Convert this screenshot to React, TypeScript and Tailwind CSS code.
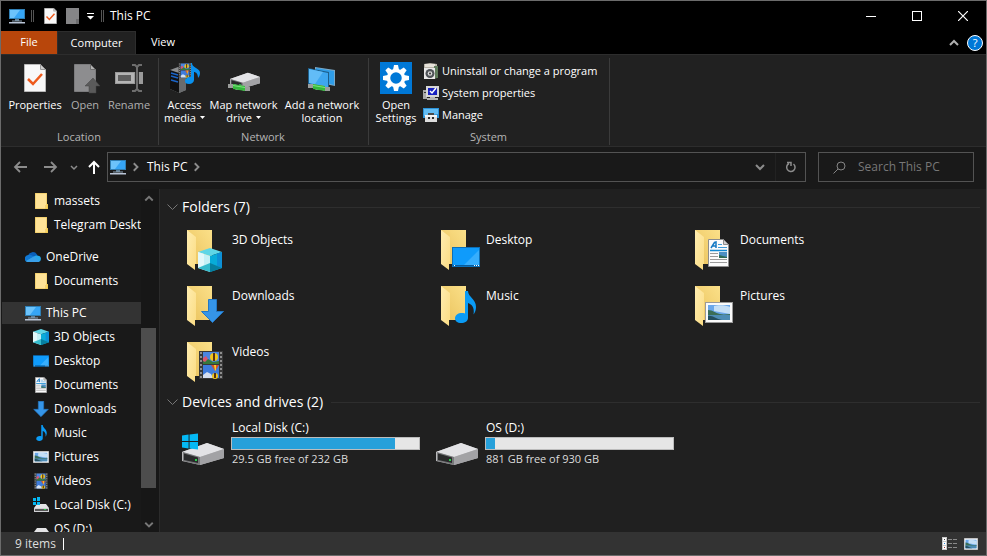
import type { ReactNode, SVGProps } from "react";

type IconProps = SVGProps<SVGSVGElement>;

/* ---------- icons ---------- */

function PcIcon(props: IconProps) {
  return (
    <svg viewBox="0 0 16 16" width={16} height={16} {...props}>
      <rect x="0" y="1" width="16" height="10" fill="#2f7fb5" />
      <path d="M1 2h14v8H1z" fill="#36a5f5" />
      <path d="M1 2h10L5 10H1z" fill="#6cc3fb" />
      <path d="M6 11h4v2H6z" fill="#5f7f96" />
      <path d="M3 12.500h10v1H3z" fill="#8fa3b5" />
      <path d="M0 14h16v1.500H0z" fill="#b9c4d6" />
    </svg>
  );
}

function SmallFolderIcon(props: IconProps) {
  return (
    <svg viewBox="0 0 16 16" width={16} height={16} {...props}>
      <path d="M2 0h12v11h1v5H2z" fill="#e9c04d" />
      <path d="M2.500 .5h11V12h-1v3.500h-10z" fill="#ffe397" />
      <path d="M13 11.500h1.500v4H13z" fill="#fbd45f" />
    </svg>
  );
}

function OneDriveIcon(props: IconProps) {
  return (
    <svg viewBox="0 0 16 16" width={16} height={16} {...props}>
      <path d="M3 6.500A5 5 0 0 1 12 5.500l1 2-5 3-5-1z" fill="#0a5fb9" />
      <path d="M3 6a3.700 3.700 0 0 0-2 6.500L10 8 6 6a5 5 0 0 0-3 0z" fill="#1078d4" />
      <path d="M9 7.500a4 4 0 0 1 4-.8 3.200 3.200 0 0 1 .5 6.300H3a3 3 0 0 1-2-1z" fill="#28a8ea" />
      <path d="M9 7.500l5.500 5A3 3 0 0 1 13.500 13H3a3 3 0 0 1-2-.8z" fill="#3a9fe8" />
    </svg>
  );
}

function CubeIcon(props: IconProps) {
  return (
    <svg viewBox="0 0 24 24" width={16} height={16} {...props}>
      <path d="M0 4l12-4 12 4-12 4z" fill="#5fd6e6" />
      <path d="M0 4l12 4v16L0 20z" fill="#c4f1f6" />
      <path d="M0 4l6 2v11l-6 3z" fill="#e2f8fa" />
      <path d="M12 8l12-4v16l-12 4z" fill="#08acd9" />
      <path d="M19 5.700L24 4v16l-5-2z" fill="#0d90d6" />
      <path d="M0 20l12-5v9z" fill="#35bccd" />
      <path d="M12 15l12 5-12 4z" fill="#077f9f" />
    </svg>
  );
}

function DesktopIcon(props: IconProps) {
  return (
    <svg viewBox="0 0 28 20" width={16} height={12} {...props}>
      <rect width="28" height="20" fill="#0b6fb8" />
      <path d="M1 1h26v17H1z" fill="#0f9bfb" />
      <path d="M27 3L12 18h15z" fill="#37aefd" />
      <path d="M1 18h26v1H1z" fill="#065a9b" />
      <path d="M2 18h1v1H2zM22 18h1v1h-1zM24 18h1v1h-1zM26 18h1v1h-1z" fill="#fff" />
    </svg>
  );
}

function DocumentIcon(props: IconProps) {
  return (
    <svg viewBox="0 0 21 28" width={12} height={16} {...props}>
      <path d="M.5 .5h15l5 5v22H.5z" fill="#fbfbfb" stroke="#8d8d8d" />
      <path d="M15.500 .5v5h5z" fill="#d0d0d0" stroke="#8d8d8d" />
      <path d="M3 9L6.500 3.500 8 3v6M4.500 7H8" fill="none" stroke="#1479c4" strokeWidth="1.500" />
      <path d="M10 5.500h4M10 8.500h9" stroke="#3f9bd8" />
      <path d="M2 11.500h17" stroke="#1289d3" strokeWidth="1.500" />
      <path d="M2 14.500h8M2 17.500h8M2 20.500h17M2 23.500h17" stroke="#9b9b9b" />
      <path d="M11 13h8v6h-8z" fill="#4e90c4" />
      <path d="M11 16l4 1 4 1v1h-8z" fill="#2e6b55" />
    </svg>
  );
}

function DownloadIcon(props: IconProps) {
  return (
    <svg viewBox="0 0 23 24" width={16} height={16} {...props}>
      <path d="M7.500 .5h8v12h7l-11 11-11-11h7z" fill="#3595e8" stroke="#2377c4" />
    </svg>
  );
}

function MusicIcon(props: IconProps) {
  return (
    <svg viewBox="0 0 21 32" width={11} height={16} {...props}>
      <path
        d="M10 0h3c0 6 8 8 8 16 0 3-1 6-2.500 7.500C20 16 16 13 13 12v15c0 3-3 5-7 5-3.500 0-6-2-6-4.500C0 24 3 22 7 22c1 0 2 0 3 .5z"
        fill="#0a9bf5"
      />
    </svg>
  );
}

function PictureIcon(props: IconProps) {
  return (
    <svg viewBox="0 0 28 21" width={16} height={12} {...props}>
      <rect width="28" height="21" fill="#9a9a9a" />
      <path d="M1 1h26v19H1z" fill="#fafafa" />
      <path d="M3 3h22v15H3z" fill="#6aa7ea" />
      <path d="M9 4c4-1 12-1 16 1v7L9 9z" fill="#c5dff6" />
      <path d="M3 8c5 0 7 3 12 4 4 1 7 0 10 0v2H3z" fill="#3b6e57" />
      <path d="M3 13h22v5H3z" fill="#4d8cb4" />
      <path d="M3 14c4-1 8 3 14 4H3z" fill="#244f60" />
    </svg>
  );
}

function VideoIcon(props: IconProps) {
  return (
    <svg viewBox="0 0 24 28" width={14} height={16} {...props}>
      <path d="M0 0h24v28H0z" fill="#383838" />
      <path d="M4 1h16v12H4z" fill="#4a86e0" />
      <path d="M4 14h16v13H4z" fill="#3f7cdc" />
      <path d="M4 10l5-2 5 3 6-1v3H4z" fill="#37783c" />
      <path d="M4 7l3-2 2 3-3 3-2-1z" fill="#d85670" />
      <circle cx="15" cy="6" r="4" fill="#f1c51b" />
      <path d="M14 2h2v8h-2z" fill="#553315" />
      <path d="M4 24l4-3 4 2 2 4H4z" fill="#d5dff0" />
      <path d="M12 14h8l-4 6z" fill="#d4512a" />
      <path d="M15 14h2v5l-1 1z" fill="#f5cf2d" />
      <circle cx="16" cy="25" r="3" fill="#f1c51b" />
      <path d="M15 22h2v5h-2z" fill="#553315" />
      <path d="M2 1v27M22 1v27" stroke="#8f8f8f" strokeWidth="2" strokeDasharray="2 2" />
    </svg>
  );
}

function WindowsLogo(props: IconProps) {
  return (
    <svg viewBox="0 0 17 17" {...props}>
      <path d="M0 2l7-1v7H0zM8 1l9-1v8H8zM0 9h7v7l-7-1zM8 9h9v8l-9-1z" fill="#04b8f4" />
    </svg>
  );
}

function DriveShape(props: IconProps) {
  return (
    <svg viewBox="0 0 42 22" {...props}>
      <path d="M0 9L25 0l17 6v9L18 22 0 18z" fill="#b9b9bb" />
      <path d="M0 9L25 0l17 6-24 8z" fill="#e3e3e6" />
      <path d="M18 14l24-8v9l-24 7z" fill="#a2a2a5" />
      <path d="M1 9l17 5v8L1 18z" fill="#77787a" />
      <path d="M2 10.500l14 4v5.500L2 17z" fill="#292a2b" />
      <path d="M13 16h2v2h-2z" fill="#28d04a" />
    </svg>
  );
}

function SmallDriveIcon({ windows = false }: { windows?: boolean }) {
  return (
    <svg viewBox="0 0 16 16" width={16} height={16}>
      <path d="M4 7h9l3 4H1z" fill="#e4e4e6" />
      <path d="M1 11h15v4H1z" fill="#cfcfd2" />
      <path d="M2 12h13v2H2z" fill="#555" />
      <path d="M11 12h2v1h-2z" fill="#28d04a" />
      {windows && <path d="M0 1h3v3H0zM4 0h3v4H4zM0 5h3v3H0zM4 5h3v3H4z" fill="#04b8f4" />}
    </svg>
  );
}

function LargeFolder({ children }: { children: ReactNode }) {
  return (
    <svg viewBox="0 0 48 48" className="size-12 shrink-0" aria-hidden="true">
      <defs>
        <linearGradient id="folder-back" x1="0" y1="1" x2="1" y2="0">
          <stop offset="0" stopColor="#eac25c" />
          <stop offset="1" stopColor="#fbe089" />
        </linearGradient>
        <linearGradient id="folder-front" x1="0" y1="0" x2="1" y2="1">
          <stop offset="0" stopColor="#ffedb0" />
          <stop offset="1" stopColor="#fbdc83" />
        </linearGradient>
      </defs>
      <path d="M5 4h25v34H5z" fill="url(#folder-back)" />
      <path d="M5 4l9 7v27h-1v6l-8-6z" fill="url(#folder-front)" />
      {children}
    </svg>
  );
}

function CheckedPage(props: IconProps) {
  return (
    <svg viewBox="0 0 22 28" {...props}>
      <path d="M.5 .5h16l5 5v22H.5z" fill="#f8f8f8" stroke="#b9b9b9" />
      <path d="M16.500 .5v5h5z" fill="#cfcfcf" stroke="#999" />
      <path d="M4 15l5 5 9-10" fill="none" stroke="#ee5a1c" strokeWidth="2.500" />
    </svg>
  );
}

function OpenIcon() {
  return (
    <svg viewBox="0 0 32 32" width={32} height={32}>
      <path d="M5.500 2.500h16l5 5v22h-21z" fill="#8d8d8f" stroke="#7c7c7e" />
      <path d="M21.500 2.500v5h5z" fill="#b5b5b5" stroke="#6f6f6f" />
      <path d="M24 16l7 8h-4v7h-7v-7h-4z" fill="#5a5a5a" stroke="#444" strokeWidth=".5" />
    </svg>
  );
}

function RenameIcon() {
  return (
    <svg viewBox="0 0 32 32" width={32} height={32}>
      <path d="M2 10h28v12H2z" fill="#9a9a9a" />
      <path d="M3 11h18v10H3z" fill="#b4b4b4" />
      <path d="M5 13h13v6H5z" fill="#5f5f5f" />
      <path d="M22 10h4v12h-4z" fill="#333" />
      <path d="M19 3h3l2 2 2-2h3M24 5v22M19 29h3l2-2 2 2h3" fill="none" stroke="#6e6e6e" strokeWidth="2" />
    </svg>
  );
}

function AccessMediaIcon() {
  return (
    <svg viewBox="0 0 32 32" width={32} height={32}>
      <path d="M1 8l8-3 8 2v21l-7 3-9-4z" fill="#8c8e90" />
      <path d="M1 8l9 3v20l-9-4z" fill="#111" />
      <path d="M2 11l7 2M2 14l7 2M2 18l7 2" stroke="#1a64c8" strokeWidth="1.500" />
      <path d="M10 11l7-3v20l-7 3z" fill="#696b6d" />
      <VideoIcon x={8} y={1} width={16} height={15} />
      <path d="M23 1c0 5 8 5 8 10 0 2-1 4-2 5 0-4-2-6-4-6v8c0 2-2 4-5 4s-4-1-4-3 2-4 5-4h1V1z" fill="#0a91ee" />
    </svg>
  );
}

function NetworkCable() {
  return (
    <>
      <path d="M0 0h7l2 1h5l3 2h5v4h-6l-2-1H8L6 4H0z" fill="#9b9d9b" />
      <path d="M5 0l12 2v5L5 5z" fill="#35b83c" />
      <path d="M5 1l12 2v1L5 2z" fill="#7ce57e" />
    </>
  );
}

function MapDriveIcon() {
  return (
    <svg viewBox="0 0 32 32" width={32} height={32}>
      <DriveShape x={2} y={10} width={30} height={17} />
      <g transform="translate(0 22)">
        <NetworkCable />
      </g>
    </svg>
  );
}

function AddLocationIcon() {
  return (
    <svg viewBox="0 0 32 32" width={32} height={32}>
      <path d="M9 5l20 3v16L9 20z" fill="#7aa9c8" />
      <path d="M10 6l18 3v14l-18-5z" fill="#2f9de8" />
      <path d="M2 6l21 4v17L2 22z" fill="#1d5f8c" />
      <path d="M3 7l19 4v15L3 21z" fill="#3ea7f0" />
      <path d="M3 7l14 3-8 12-6-1z" fill="#62bcf7" />
      <g transform="translate(2 22)">
        <NetworkCable />
      </g>
    </svg>
  );
}

function SettingsIcon() {
  return (
    <svg viewBox="0 0 32 32" width={32} height={32}>
      <path d="M0 0h32v32H0z" fill="#0078d7" />
      <g fill="#fff">
        {[0, 45, 90, 135, 180, 225, 270, 315].map((angle) => (
          <path key={angle} d="M14 3h4l1 5h-6z" transform={`rotate(${angle} 16 16)`} />
        ))}
      </g>
      <circle cx="16" cy="16" r="7.500" fill="none" stroke="#fff" strokeWidth="3.500" />
    </svg>
  );
}

function UninstallIcon() {
  return (
    <svg viewBox="0 0 16 16" width={16} height={16} className="shrink-0">
      <path d="M1 1l6-1 7 1v14l-5 1-8-1z" fill="#b8b3a8" />
      <path d="M2 1h10v3H2z" fill="#e6e2da" />
      <path d="M11 3h4v12h-4z" fill="#5f7b5c" />
      <path d="M1 5h11v11H1z" fill="#e9e9e9" />
      <circle cx="7" cy="10.500" r="4.500" fill="#4f5358" />
      <circle cx="7" cy="10.500" r="2.300" fill="#dadada" />
      <circle cx="7" cy="10.500" r="1" fill="#333" />
    </svg>
  );
}

function SystemIcon() {
  return (
    <svg viewBox="0 0 16 16" width={16} height={16} className="shrink-0">
      <path d="M0 5h4v9H0z" fill="#a9a9a9" />
      <path d="M1 7h2v1H1z" fill="#333" />
      <path d="M3 1h13v11H3z" fill="#d6d6d6" />
      <path d="M5 3h9v7H5z" fill="#1720c0" />
      <path d="M7 6l2 2 4-5" fill="none" stroke="#fff" strokeWidth="1.500" />
      <path d="M7 12h5v1h3v2H4v-2h3z" fill="#b5b5b5" />
    </svg>
  );
}

function ManageIcon() {
  return (
    <svg viewBox="0 0 16 16" width={16} height={16} className="shrink-0">
      <path d="M0 1h16v10H0z" fill="#2c93d9" />
      <path d="M1 2h14v5L1 9z" fill="#64bdf3" />
      <path d="M5 6h6v2H5z" fill="#4a4a4a" />
      <path d="M2 8h12v7H2z" fill="#dedede" />
      <path d="M2 8h12v2H2z" fill="#f5f5f5" />
      <path d="M5 10h2v2H5zM9 10h2v2H9z" fill="#303030" />
    </svg>
  );
}

function Chevron({ direction, className }: { direction: "up" | "down" | "right"; className: string }) {
  const paths = {
    up: "M1 6l3-3 3 3",
    down: "M1 3l3 3 3-3",
    right: "M3 1l3 3-3 3",
  };
  return (
    <svg viewBox="0 0 8 8" className={className} aria-hidden="true">
      <path d={paths[direction]} fill="none" stroke="currentColor" strokeWidth="1.500" />
    </svg>
  );
}

/* ---------- data ---------- */

const sidebarGroups = [
  [
    { name: "massets", level: 2, icon: <SmallFolderIcon /> },
    { name: "Telegram Desktop", level: 2, icon: <SmallFolderIcon /> },
  ],
  [
    { name: "OneDrive", level: 1, icon: <OneDriveIcon /> },
    { name: "Documents", level: 2, icon: <SmallFolderIcon /> },
  ],
  [
    { name: "This PC", level: 1, icon: <PcIcon />, selected: true },
    { name: "3D Objects", level: 2, icon: <CubeIcon /> },
    { name: "Desktop", level: 2, icon: <DesktopIcon /> },
    { name: "Documents", level: 2, icon: <DocumentIcon /> },
    { name: "Downloads", level: 2, icon: <DownloadIcon /> },
    { name: "Music", level: 2, icon: <MusicIcon /> },
    { name: "Pictures", level: 2, icon: <PictureIcon /> },
    { name: "Videos", level: 2, icon: <VideoIcon /> },
    { name: "Local Disk (C:)", level: 2, icon: <SmallDriveIcon windows /> },
    { name: "OS (D:)", level: 2, icon: <SmallDriveIcon /> },
  ],
];

const folders = [
  { name: "3D Objects", icon: <CubeIcon x={16} y={22} width={24} height={24} /> },
  { name: "Desktop", icon: <DesktopIcon x={16} y={21} width={28} height={20} /> },
  { name: "Documents", icon: <DocumentIcon x={18} y={13} width={21} height={28} /> },
  { name: "Downloads", icon: <DownloadIcon x={19} y={17} width={23} height={24} /> },
  { name: "Music", icon: <MusicIcon x={19} y={9} width={21} height={32} /> },
  { name: "Pictures", icon: <PictureIcon x={15} y={20} width={28} height={21} /> },
  { name: "Videos", icon: <VideoIcon x={17} y={13} width={24} height={28} /> },
];

const drives = [
  { name: "Local Disk (C:)", free: "29.5 GB free of 232 GB", used: 87, windows: true },
  { name: "OS (D:)", free: "881 GB free of 930 GB", used: 5, windows: false },
];

const systemTools = [
  { name: "Uninstall or change a program", icon: <UninstallIcon /> },
  { name: "System properties", icon: <SystemIcon /> },
  { name: "Manage", icon: <ManageIcon /> },
];

/* ---------- parts ---------- */

function TitleBar() {
  return (
    <header className="flex h-[30px] shrink-0 items-center bg-black pl-2">
      <PcIcon />
      <span className="ml-1.5 h-3 w-[3px] border-x border-[#555]" />
      <button aria-label="Properties" className="ml-2.5">
        <CheckedPage className="h-4 w-[13px]" />
      </button>
      <button aria-label="New folder" className="ml-[9px]">
        <svg viewBox="0 0 13 16" className="h-4 w-[13px]">
          <path d="M0 0h13v11h-1v5H0z" fill="#858587" />
          <path d="M10 11h3v5h-3z" fill="#6c6c6e" />
        </svg>
      </button>
      <button aria-label="Customize Quick Access Toolbar" className="ml-2">
        <svg viewBox="0 0 7 7" className="size-[7px]">
          <path d="M0 0h7v1H0zM0 3h7L3.500 6.500z" fill="#fff" />
        </svg>
      </button>
      <span className="ml-[7px] h-3 w-[3px] border-x border-[#555]" />
      <h1 className="ml-1.5 flex-1 text-xs text-white">This PC</h1>
      <button aria-label="Minimize" className="flex h-full w-[46px] items-center justify-center">
        <span className="h-px w-2.5 bg-white" />
      </button>
      <button aria-label="Maximize" className="flex h-full w-[46px] items-center justify-center">
        <span className="size-2.5 border border-white" />
      </button>
      <button aria-label="Close" className="flex h-full w-[46px] items-center justify-center">
        <svg viewBox="0 0 10 10" className="size-2.5">
          <path d="M0 0l10 10M10 0L0 10" stroke="#fff" strokeWidth="1.200" />
        </svg>
      </button>
    </header>
  );
}

function Tabs() {
  return (
    <nav className="flex h-[23px] shrink-0 items-stretch bg-black text-[11px] text-white">
      <button className="w-14 bg-[#b8460b]">File</button>
      <button className="w-[79px] border-x border-t border-[#2d2d2d] bg-[#212121]">Computer</button>
      <button className="w-[54px]">View</button>
      <div className="ml-auto flex items-center gap-2 pr-[3px]">
        <button aria-label="Minimize the Ribbon" className="text-[#b0b0b0]">
          <svg viewBox="0 0 10 7" className="h-[7px] w-2.5">
            <path d="M1 6l4-4 4 4" fill="none" stroke="currentColor" strokeWidth="2" />
          </svg>
        </button>
        <button
          aria-label="Help"
          className="flex size-4 items-center justify-center rounded-full border border-white bg-[#0078d7] leading-none"
        >
          ?
        </button>
      </div>
    </nav>
  );
}

function RibbonButton({
  icon,
  lines,
  width,
  menu = false,
  disabled = false,
}: {
  icon: ReactNode;
  lines: string[];
  width: string;
  menu?: boolean;
  disabled?: boolean;
}) {
  return (
    <button
      disabled={disabled}
      className={`flex flex-col items-center whitespace-nowrap text-[11px] leading-[13px] ${width} ${
        disabled ? "text-[#b0b0b0]" : "text-white"
      }`}
    >
      <span className="mb-1 flex size-8 items-center justify-center">{icon}</span>
      {lines.map((line, i) => (
        <span key={line} className="flex items-center gap-1">
          {line}
          {menu && i === lines.length - 1 && (
            <svg viewBox="0 0 5 3" className="h-[3px] w-[5px]">
              <path d="M0 0h5L2.500 3z" fill="currentColor" />
            </svg>
          )}
        </span>
      ))}
    </button>
  );
}

function RibbonGroup({ label, children }: { label: string; children: ReactNode }) {
  return (
    <section className="mt-[3px] mb-px flex flex-col border-r border-[#3b3b3b] pr-[5px] pl-1">
      <div className="flex flex-1 items-start pt-1">{children}</div>
      <h2 className="pb-px text-center text-[11px] leading-[14px] text-[#b5b5b5]">{label}</h2>
    </section>
  );
}

function Ribbon() {
  return (
    <div className="flex h-[93px] shrink-0 border-y border-[#2d2d2d] bg-[#212121]">
      <RibbonGroup label="Location">
        <RibbonButton icon={<CheckedPage className="h-7 w-[22px]" />} lines={["Properties"]} width="w-[60px]" />
        <RibbonButton icon={<OpenIcon />} lines={["Open"]} width="w-10" disabled />
        <RibbonButton icon={<RenameIcon />} lines={["Rename"]} width="w-12" disabled />
      </RibbonGroup>
      <RibbonGroup label="Network">
        <RibbonButton icon={<AccessMediaIcon />} lines={["Access", "media"]} width="w-[43px]" menu />
        <RibbonButton icon={<MapDriveIcon />} lines={["Map network", "drive"]} width="w-[75px]" menu />
        <RibbonButton icon={<AddLocationIcon />} lines={["Add a network", "location"]} width="w-[82px]" />
      </RibbonGroup>
      <RibbonGroup label="System">
        <RibbonButton icon={<SettingsIcon />} lines={["Open", "Settings"]} width="w-[46px]" />
        <div className="-mt-0.5 ml-1 flex w-[181px] flex-col">
          {systemTools.map((tool) => (
            <button
              key={tool.name}
              className="flex h-[22px] items-center gap-[3px] whitespace-nowrap text-[11px] text-white"
            >
              {tool.icon}
              {tool.name}
            </button>
          ))}
        </div>
      </RibbonGroup>
    </div>
  );
}

function NavigationBar() {
  return (
    <div className="flex shrink-0 items-center bg-[#191919] px-3 pt-[5px] pb-[7px] text-xs text-white">
      <button aria-label="Back" className="text-[#8c8c8c]">
        <svg viewBox="0 0 14 12" className="h-3 w-3.5">
          <path d="M7 1L2 6l5 5M2 6h12" fill="none" stroke="currentColor" strokeWidth="1.800" />
        </svg>
      </button>
      <button aria-label="Forward" className="ml-[17px] text-[#8c8c8c]">
        <svg viewBox="0 0 14 12" className="h-3 w-3.5">
          <path d="M7 1l5 5-5 5M12 6H0" fill="none" stroke="currentColor" strokeWidth="1.800" />
        </svg>
      </button>
      <button aria-label="Recent locations" className="ml-3 text-[#8c8c8c]">
        <Chevron direction="down" className="size-2" />
      </button>
      <button aria-label="Up" className="ml-2.5">
        <svg viewBox="0 0 12 14" className="h-3.5 w-3">
          <path d="M1 7l5-5 5 5M6 2v12" fill="none" stroke="#fff" strokeWidth="2" />
        </svg>
      </button>
      <div className="ml-[7px] flex h-[30px] flex-1 items-center border border-[#535353] pl-0.5">
        <PcIcon />
        <Chevron direction="right" className="ml-1 size-2.5 text-[#8c8c8c]" />
        <button className="mx-[7px]">This PC</button>
        <Chevron direction="right" className="-ml-1 size-2.5 text-[#8c8c8c]" />
        <button
          aria-label="Previous locations"
          className="ml-auto flex h-full w-[30px] items-center justify-center text-[#8c8c8c]"
        >
          <svg viewBox="0 0 10 7" className="h-[7px] w-2.5">
            <path d="M1 1l4 4 4-4" fill="none" stroke="currentColor" strokeWidth="2" />
          </svg>
        </button>
        <button
          aria-label="Refresh"
          className="flex h-full w-[30px] items-center justify-center border-l border-[#222] text-[#8c8c8c]"
        >
          <svg viewBox="0 0 12 12" className="size-3">
            <path d="M4 2.500A4.200 4.200 0 1 0 8.500 3M2 1.500h4V5" fill="none" stroke="currentColor" strokeWidth="1.500" />
          </svg>
        </button>
      </div>
      <label className="ml-3 flex h-[30px] w-[156px] items-center border border-[#535353] pl-3.5">
        <svg viewBox="0 0 13 13" className="size-[13px] shrink-0" aria-hidden="true">
          <circle cx="8" cy="5" r="4" fill="none" stroke="#858585" />
          <path d="M5 8L.5 12.500" stroke="#858585" />
        </svg>
        <input
          type="search"
          aria-label="Search This PC"
          placeholder="Search This PC"
          className="ml-3 w-full min-w-0 bg-transparent outline-none placeholder:text-[#777]"
        />
      </label>
    </div>
  );
}

function Sidebar() {
  return (
    <aside className="flex w-[159px] shrink-0 border-r border-[#2b2b2b] bg-[#191919]">
      <div className="flex flex-1 flex-col gap-2 overflow-hidden pl-px">
        {sidebarGroups.map((group, i) => (
          <ul key={i}>
            {group.map((item) => (
              <li key={item.name} className="py-px">
                <button
                  className={`flex h-[22px] w-full items-center gap-[5px] overflow-hidden whitespace-nowrap text-xs text-white ${
                    item.level === 1 ? "pl-[23px]" : "pl-[31px]"
                  } ${"selected" in item ? "bg-[#333]" : ""}`}
                >
                  <span className="flex w-4 shrink-0 justify-center">{item.icon}</span>
                  {item.name}
                </button>
              </li>
            ))}
          </ul>
        ))}
      </div>
      <div className="flex w-[18px] flex-col bg-[#171717] pr-[3px] text-[#777]">
        <button aria-label="Scroll up" className="flex h-[17px] items-center justify-center">
          <Chevron direction="up" className="size-2.5" />
        </button>
        <div className="flex-[122]" />
        <div className="flex-[160] bg-[#4d4d4d]" />
        <div className="flex-[27]" />
        <button aria-label="Scroll down" className="flex h-[17px] items-center justify-center">
          <Chevron direction="down" className="size-2.5" />
        </button>
      </div>
    </aside>
  );
}

function SectionHeader({ title }: { title: string }) {
  return (
    <div className="flex h-5 items-center">
      <svg viewBox="0 0 11 7" className="h-[7px] w-[11px]" aria-hidden="true">
        <path d="M.5 .5l5 5 5-5" fill="none" stroke="#777" />
      </svg>
      <h2 className="ml-1 text-sm text-white">{title}</h2>
      <span className="ml-2 h-px flex-1 bg-[#2e2e2e]" />
    </div>
  );
}

function Content() {
  return (
    <main className="min-w-0 flex-1 overflow-hidden bg-[#202020] pt-2 pr-1.5 pl-[7px]">
      <SectionHeader title="Folders (7)" />
      <div className="mt-[9px] mb-1.5 grid grid-cols-[repeat(auto-fill,254px)] gap-y-2 pl-[15px]">
        {folders.map((folder) => (
          <button key={folder.name} className="flex items-start gap-0.5 text-left text-xs text-white">
            <LargeFolder>{folder.icon}</LargeFolder>
            <span className="mt-1.5">{folder.name}</span>
          </button>
        ))}
      </div>
      <SectionHeader title="Devices and drives (2)" />
      <div className="mt-2 grid grid-cols-[repeat(auto-fill,254px)] pl-[15px]">
        {drives.map((drive) => (
          <button key={drive.name} className="flex items-start gap-px text-left text-xs text-white">
            <svg viewBox="0 0 48 48" className="size-12 shrink-0" aria-hidden="true">
              <DriveShape x={0} y={23} width={42} height={22} />
              {drive.windows && <WindowsLogo x={0} y={13} width={16} height={17} />}
            </svg>
            <span className="flex w-[189px] flex-col">
              <span className="pl-px">{drive.name}</span>
              <span
                role="progressbar"
                aria-label={`${drive.name} used space`}
                aria-valuenow={drive.used}
                className="mt-px flex h-[13px] border border-[#bcbcbc] bg-[#e6e6e6]"
              >
                <span className="bg-[#26a0da]" style={{ width: `${drive.used}%` }} />
              </span>
              <span className="mt-px pl-px text-[11px] leading-4 text-[#dcdcdc]">{drive.free}</span>
            </span>
          </button>
        ))}
      </div>
    </main>
  );
}

function StatusBar() {
  return (
    <footer className="flex h-[23px] shrink-0 items-center bg-[#333] pr-2 pl-3.5 text-xs text-[#dedede]">
      <span>9 items</span>
      <span className="ml-[7px] h-3 w-px bg-white" />
      <button aria-label="Details view" className="ml-auto">
        <svg viewBox="0 0 16 13" className="h-[13px] w-4">
          <path d="M0 0h5v13H0z" fill="#c9c9c9" />
          <path d="M1 1h3v3H1zM1 5h3v3H1zM1 9h3v3H1z" fill="#fff" />
          <path d="M2 2h1v1H2z" fill="#444" />
          <path d="M2 6h1v1H2z" fill="#2d84d6" />
          <path d="M2 10h1v1H2z" fill="#a33" />
          <path d="M6 2.500h9M6 6.500h9M6 10.500h9" stroke="#8a8a8a" strokeDasharray="4 1" />
        </svg>
      </button>
      <button aria-label="Large icons view" className="ml-1.5">
        <PictureIcon width={14} height={12} preserveAspectRatio="none" />
      </button>
    </footer>
  );
}

export default function App() {
  return (
    <div className="flex h-screen flex-col border border-[#6b6b6b] bg-[#191919] font-['Open_Sans','Noto_Sans',sans-serif]">
      <TitleBar />
      <Tabs />
      <Ribbon />
      <NavigationBar />
      <div className="flex min-h-0 flex-1">
        <Sidebar />
        <Content />
      </div>
      <StatusBar />
    </div>
  );
}
